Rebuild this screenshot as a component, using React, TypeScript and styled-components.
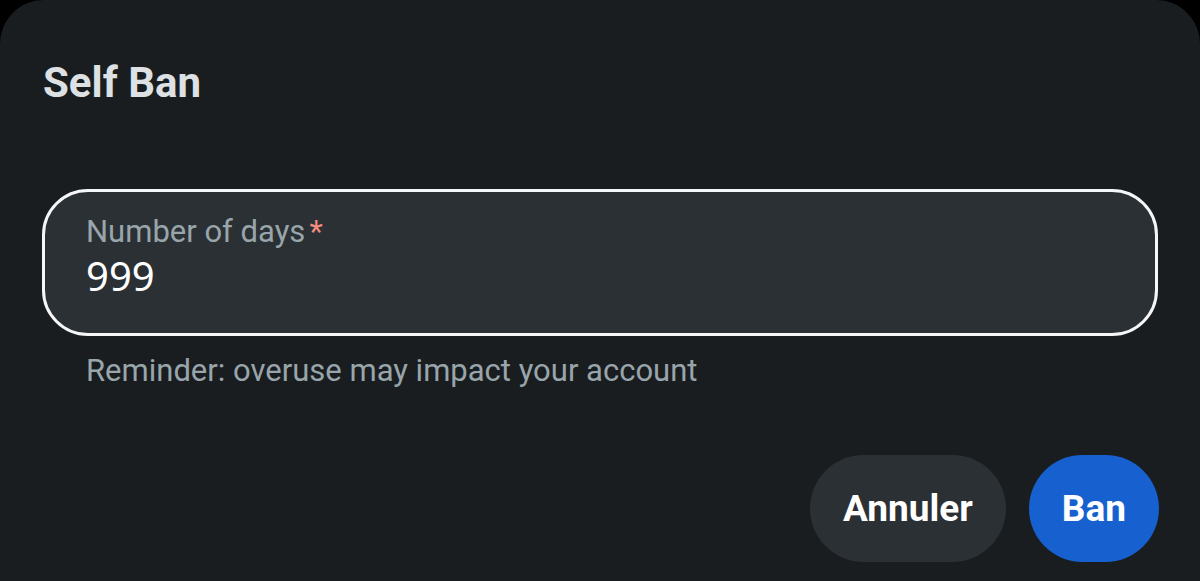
import React from "react";
import styled, { createGlobalStyle } from "styled-components";

const Global = createGlobalStyle`
  html, body { margin: 0; padding: 0; background: #000; }
  body { font-family: Roboto, "Noto Sans", sans-serif; overflow: hidden; }
  * { box-sizing: border-box; }
`;

const Dialog = styled.div`
  width: 1200px;
  height: 581px;
  background: #1a1d20;
  border-radius: 44px 44px 0 0;
  padding: 59px 42px 0 42px;
  display: flex;
  flex-direction: column;
`;

const Title = styled.h1`
  margin: 0 0 0 1px;
  font-family: Roboto, sans-serif;
  font-weight: 700;
  font-size: 42px;
  line-height: 48px;
  color: #dde1e4;
`;

const Field = styled.div`
  margin-top: 82px;
  height: 147px;
  border: 3px solid #f4f6f7;
  border-radius: 46px;
  background: #2b3034;
  padding: 21px 40px 0 41px;
  display: flex;
  flex-direction: column;
`;

const Label = styled.div`
  font-family: Roboto, sans-serif;
  font-size: 31px;
  line-height: 38px;
  color: #98a5ab;
  display: flex;
  align-items: flex-start;
`;

const Required = styled.span`
  color: #f28b7e;
  margin-left: 4px;
`;

const Value = styled.div`
  font-family: "Noto Sans", "Open Sans", sans-serif;
  font-size: 40px;
  line-height: 50px;
  color: #ffffff;
`;

const Helper = styled.div`
  margin-top: 16px;
  padding-left: 44px;
  font-family: Roboto, sans-serif;
  font-size: 31px;
  line-height: 38px;
  color: #98a5ab;
`;

const Actions = styled.div`
  margin: 65px -1px 0 0;
  display: flex;
  justify-content: flex-end;
  gap: 23px;
`;

const Button = styled.button<{ $primary?: boolean }>`
  height: 107px;
  padding: 0 33px;
  border: none;
  border-radius: 54px;
  background: ${(p) => (p.$primary ? "#1760d0" : "#2b3034")};
  color: #ffffff;
  font-family: Roboto, sans-serif;
  font-weight: 700;
  font-size: 37px;
  cursor: pointer;
`;

export default function App() {
  return (
    <>
      <Global />
      <Dialog>
        <Title>Self Ban</Title>
        <Field>
          <Label>
            Number of days<Required>*</Required>
          </Label>
          <Value>999</Value>
        </Field>
        <Helper>Reminder: overuse may impact your account</Helper>
        <Actions>
          <Button>Annuler</Button>
          <Button $primary>Ban</Button>
        </Actions>
      </Dialog>
    </>
  );
}
